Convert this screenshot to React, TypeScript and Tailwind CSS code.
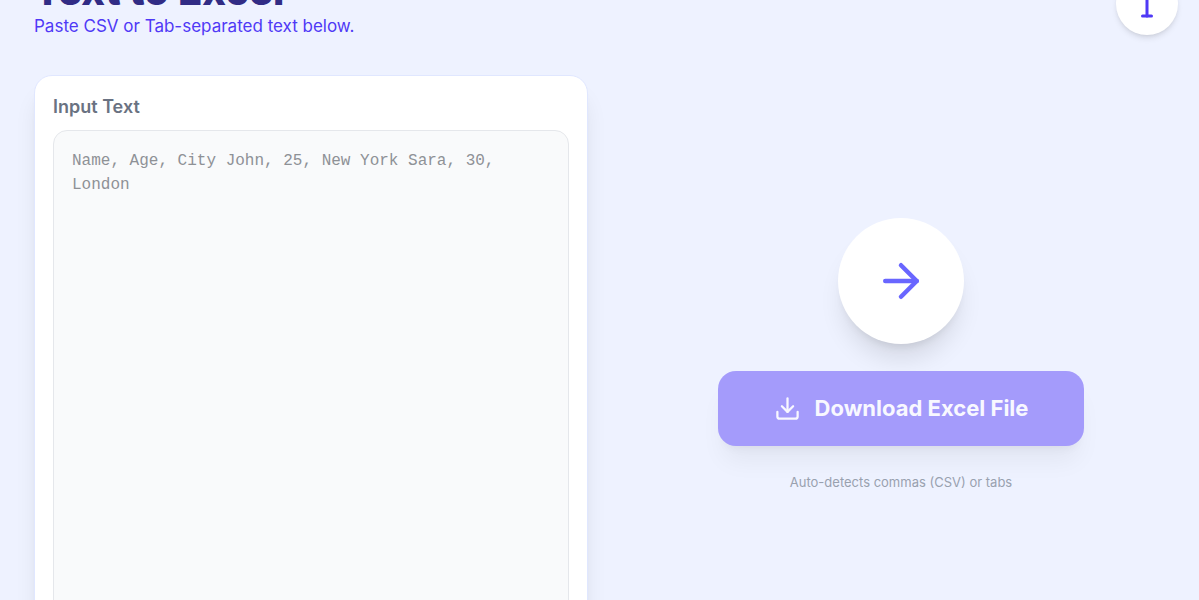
import { ArrowRight, Download, Type } from "lucide-react";
import { useState } from "react";

export default function App() {
  const [text, setText] = useState("");
  const isEmpty = text.trim().length === 0;

  function handleDownload() {
    const delimiter = text.includes("\t") ? "\t" : ",";
    const rows = text.trim().split("\n").map((line) => line.split(delimiter).map((cell) => cell.trim()));
    const blob = new Blob([rows.map((row) => row.join("\t")).join("\n")], { type: "application/vnd.ms-excel" });
    const url = URL.createObjectURL(blob);
    const link = document.createElement("a");
    link.href = url;
    link.download = "data.xls";
    link.click();
    URL.revokeObjectURL(url);
  }

  return (
    <main className="h-screen overflow-hidden bg-[#eef2ff] pr-[21px] pl-[34px] font-['Inter',sans-serif]">
      <header className="-mt-[31px] mb-9 flex items-center justify-between">
        <div>
          <h1 className="text-[40px] leading-[44px] font-extrabold text-indigo-900">Text to Excel</h1>
          <p className="text-[17px] leading-[26px] text-[#4f39f6]">Paste CSV or Tab-separated text below.</p>
        </div>
        <div className="rounded-full bg-white p-[13px] shadow-md">
          <Type className="size-9 text-[#4f39f6]" aria-hidden="true" />
        </div>
      </header>

      <div className="grid grid-cols-2 gap-9">
        <section className="flex flex-col rounded-[18px] border border-indigo-100 bg-white p-[18px] shadow-xl">
          <label htmlFor="input-text" className="mb-[10px] text-[18px] leading-[26px] font-semibold text-gray-500">
            Input Text
          </label>
          <textarea
            id="input-text"
            value={text}
            onChange={(e) => setText(e.target.value)}
            placeholder="Name, Age, City John, 25, New York Sara, 30, London"
            className="h-[484px] w-full resize-none rounded-[14px] border border-gray-200 bg-gray-50 p-[18px] font-['Liberation_Mono',monospace] text-[16px] leading-6 text-gray-700 outline-none placeholder:text-[#8e9196]"
          />
        </section>

        <section className="flex flex-col items-center justify-center gap-[27px]">
          <div className="rounded-full bg-white p-9 shadow-xl">
            <ArrowRight className="size-[54px] text-[#6966ff]" aria-hidden="true" />
          </div>
          <button
            type="button"
            disabled={isEmpty}
            onClick={handleDownload}
            className="flex h-[75px] items-center gap-[14px] rounded-[18px] bg-indigo-600 px-14 text-[22px] leading-8 font-bold text-white shadow-xl disabled:bg-[#a49bfb] disabled:text-[#f8f8ff] disabled:shadow-black/5"
          >
            <Download className="size-[27px]" aria-hidden="true" />
            Download Excel File
          </button>
          <p className="text-[13px] leading-[18px] text-[#99a1af]">Auto-detects commas (CSV) or tabs</p>
        </section>
      </div>
    </main>
  );
}
